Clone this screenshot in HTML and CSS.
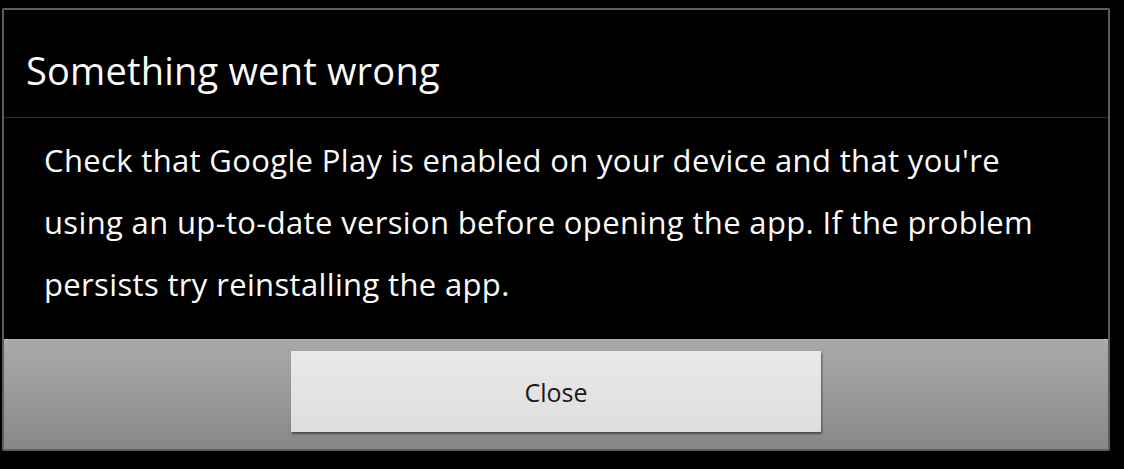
FILE: index.html
```html
<!DOCTYPE html>
<html>
<head>
<meta charset="utf-8">
<link rel="stylesheet" href="styles.css">
</head>
<body>
<div class="dialog">
  <div class="title">Something went wrong</div>
  <div class="message">Check that Google Play is enabled on your device and that you're using an up-to-date version before opening the app. If the problem persists try reinstalling the app.</div>
  <div class="actions">
    <button class="btn">Close</button>
  </div>
</div>
</body>
</html>
```

FILE: styles.css
```css
html, body {
  margin: 0;
  padding: 0;
  background: #000;
}
body {
  font-family: "Open Sans", "Noto Sans", sans-serif;
  color: #fff;
  width: 1124px;
  height: 469px;
  overflow: hidden;
}
.dialog {
  margin: 8px 0 0 2px;
  width: 1104px;
  height: 439px;
  border: 2px solid #5e5e5e;
  border-radius: 2px;
  display: flex;
  flex-direction: column;
  background: #000;
}
.title {
  height: 52px;
  padding: 34px 0 21px 22px;
  font-size: 38px;
  line-height: 52px;
  letter-spacing: 0.2px;
  border-bottom: 1px solid #2e2e2e;
  color: #fafafa;
}
.message {
  flex: 1;
  padding: 11px 50px 0 40px;
  font-size: 31px;
  line-height: 62px;
  letter-spacing: 0.35px;
  color: #fafafa;
}
.actions {
  height: 110px;
  display: flex;
  align-items: center;
  justify-content: center;
  background: linear-gradient(to bottom, #a9a9a9 0%, #999 50%, #878787 100%);
  border-top: 1px solid #b4b4b4;
  box-sizing: border-box;
}
.btn {
  width: 530px;
  height: 81px;
  margin: 2px 0 8px 0;
  border: none;
  border-radius: 1px;
  background: linear-gradient(to bottom, #e9e9e9 0%, #dedede 100%);
  box-shadow: 1px 2px 2px rgba(0,0,0,0.45);
  font-family: "Open Sans", "Noto Sans", sans-serif;
  font-size: 25px;
  color: #1a1a1a;
  padding: 0;
  display: flex;
  align-items: center;
  justify-content: center;
}
```
